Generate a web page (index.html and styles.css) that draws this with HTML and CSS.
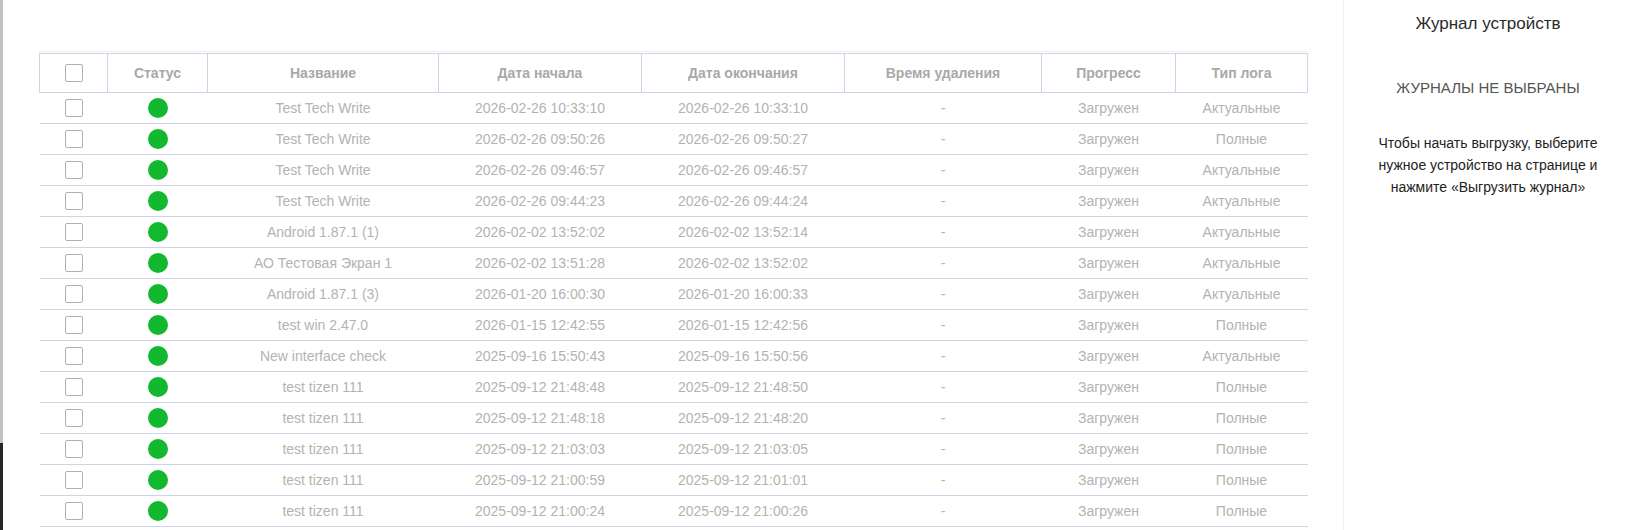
FILE: index.html
```html
<!DOCTYPE html>
<html lang="ru">
<head>
    <meta charset="UTF-8">
    <title>Журнал устройств</title>
    <link rel="stylesheet" href="styles.css">
</head>
<body>
    <div class="layout">
        <div class="edge"></div>

        <main class="main">
            <div class="table-wrap">
                <table class="logs">
                    <colgroup>
                        <col class="c-check">
                        <col class="c-status">
                        <col class="c-name">
                        <col class="c-date">
                        <col class="c-date">
                        <col class="c-del">
                        <col class="c-progress">
                        <col class="c-type">
                    </colgroup>
                    <thead>
                        <tr>
                            <th><input type="checkbox" class="check"></th>
                            <th>Статус</th>
                            <th>Название</th>
                            <th>Дата начала</th>
                            <th>Дата окончания</th>
                            <th>Время удаления</th>
                            <th>Прогресс</th>
                            <th>Тип лога</th>
                        </tr>
                    </thead>
                    <tbody>
                        <tr><td><input type="checkbox" class="check"></td><td><span class="dot"></span></td><td>Test Tech Write</td><td>2026-02-26 10:33:10</td><td>2026-02-26 10:33:10</td><td>-</td><td>Загружен</td><td>Актуальные</td></tr>
                        <tr><td><input type="checkbox" class="check"></td><td><span class="dot"></span></td><td>Test Tech Write</td><td>2026-02-26 09:50:26</td><td>2026-02-26 09:50:27</td><td>-</td><td>Загружен</td><td>Полные</td></tr>
                        <tr><td><input type="checkbox" class="check"></td><td><span class="dot"></span></td><td>Test Tech Write</td><td>2026-02-26 09:46:57</td><td>2026-02-26 09:46:57</td><td>-</td><td>Загружен</td><td>Актуальные</td></tr>
                        <tr><td><input type="checkbox" class="check"></td><td><span class="dot"></span></td><td>Test Tech Write</td><td>2026-02-26 09:44:23</td><td>2026-02-26 09:44:24</td><td>-</td><td>Загружен</td><td>Актуальные</td></tr>
                        <tr><td><input type="checkbox" class="check"></td><td><span class="dot"></span></td><td>Android 1.87.1 (1)</td><td>2026-02-02 13:52:02</td><td>2026-02-02 13:52:14</td><td>-</td><td>Загружен</td><td>Актуальные</td></tr>
                        <tr><td><input type="checkbox" class="check"></td><td><span class="dot"></span></td><td>АО Тестовая Экран 1</td><td>2026-02-02 13:51:28</td><td>2026-02-02 13:52:02</td><td>-</td><td>Загружен</td><td>Актуальные</td></tr>
                        <tr><td><input type="checkbox" class="check"></td><td><span class="dot"></span></td><td>Android 1.87.1 (3)</td><td>2026-01-20 16:00:30</td><td>2026-01-20 16:00:33</td><td>-</td><td>Загружен</td><td>Актуальные</td></tr>
                        <tr><td><input type="checkbox" class="check"></td><td><span class="dot"></span></td><td>test win 2.47.0</td><td>2026-01-15 12:42:55</td><td>2026-01-15 12:42:56</td><td>-</td><td>Загружен</td><td>Полные</td></tr>
                        <tr><td><input type="checkbox" class="check"></td><td><span class="dot"></span></td><td>New interface check</td><td>2025-09-16 15:50:43</td><td>2025-09-16 15:50:56</td><td>-</td><td>Загружен</td><td>Актуальные</td></tr>
                        <tr><td><input type="checkbox" class="check"></td><td><span class="dot"></span></td><td>test tizen 111</td><td>2025-09-12 21:48:48</td><td>2025-09-12 21:48:50</td><td>-</td><td>Загружен</td><td>Полные</td></tr>
                        <tr><td><input type="checkbox" class="check"></td><td><span class="dot"></span></td><td>test tizen 111</td><td>2025-09-12 21:48:18</td><td>2025-09-12 21:48:20</td><td>-</td><td>Загружен</td><td>Полные</td></tr>
                        <tr><td><input type="checkbox" class="check"></td><td><span class="dot"></span></td><td>test tizen 111</td><td>2025-09-12 21:03:03</td><td>2025-09-12 21:03:05</td><td>-</td><td>Загружен</td><td>Полные</td></tr>
                        <tr><td><input type="checkbox" class="check"></td><td><span class="dot"></span></td><td>test tizen 111</td><td>2025-09-12 21:00:59</td><td>2025-09-12 21:01:01</td><td>-</td><td>Загружен</td><td>Полные</td></tr>
                        <tr><td><input type="checkbox" class="check"></td><td><span class="dot"></span></td><td>test tizen 111</td><td>2025-09-12 21:00:24</td><td>2025-09-12 21:00:26</td><td>-</td><td>Загружен</td><td>Полные</td></tr>
                    </tbody>
                </table>
            </div>
        </main>

        <!-- боковая панель журнала -->
        <aside class="side">
            <h2 class="side-title">Журнал устройств</h2>
            <div class="side-empty">ЖУРНАЛЫ НЕ ВЫБРАНЫ</div>
            <p class="side-hint">Чтобы начать выгрузку, выберите нужное устройство на странице и нажмите «Выгрузить журнал»</p>
        </aside>
    </div>
</body>
</html>
```

FILE: styles.css
```css
html, body {
    margin: 0;
    padding: 0;
    height: 100%;
    overflow: hidden;
}

body {
    font-family: 'Liberation Sans', Arial, sans-serif;
    background: #fff;
    color: #333;
}

.layout {
    display: flex;
    height: 530px;
}

.edge {
    width: 3px;
    flex-shrink: 0;
    background: linear-gradient(#c2c2c2 0, #c2c2c2 443px, #262626 443px);
}

.main {
    flex: 1;
    padding: 51px 0 0 36px;
    min-width: 0;
}

.table-wrap {
    width: 1268px;
    border-top: 1px solid #ededed;
    padding-top: 1px;
}

.logs {
    width: 100%;
    border-collapse: collapse;
    table-layout: fixed;
    font-size: 14px;
}

.c-check { width: 68px; }
.c-status { width: 100px; }
.c-name { width: 231px; }
.c-date { width: 203px; }
.c-del { width: 197px; }
.c-progress { width: 134px; }
.c-type { width: 132px; }

.logs th {
    height: 38px;
    border: 1px solid #cfd3e6;
    color: #a8a8a8;
    font-weight: bold;
    text-align: center;
    padding: 0;
}

.logs td {
    height: 30px;
    border-bottom: 1px solid #cfd3e6;
    color: #b3b3b3;
    text-align: center;
    padding: 0;
    white-space: nowrap;
}

.check {
    -webkit-appearance: none;
    appearance: none;
    display: block;
    width: 18px;
    height: 18px;
    margin: 0 auto;
    border: 1px solid #b0b0b0;
    border-radius: 2px;
    background: #fff;
    box-sizing: border-box;
}

.dot {
    display: block;
    width: 20px;
    height: 20px;
    margin: 0 auto;
    border-radius: 50%;
    background: #12b92f;
}

.side {
    width: 288px;
    flex-shrink: 0;
    border-left: 1px solid #efefef;
    text-align: center;
    padding-top: 13px;
}

.side-title {
    margin: 0;
    font-size: 17px;
    font-weight: normal;
    color: #2b2b2b;
    line-height: 22px;
}

.side-empty {
    margin-top: 42px;
    font-size: 15px;
    color: #555;
    line-height: 22px;
}

.side-hint {
    margin: 33px auto 0;
    width: 262px;
    font-size: 14px;
    line-height: 22px;
    color: #222;
}
```
